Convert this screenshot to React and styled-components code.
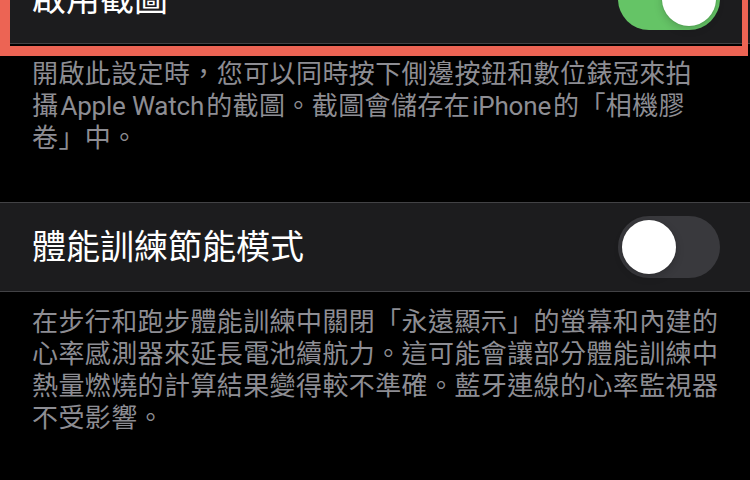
import React from "react";
import styled, { createGlobalStyle } from "styled-components";

const GlobalStyle = createGlobalStyle`
  html, body {
    margin: 0;
    padding: 0;
    background: #000;
    overflow: hidden;
  }
  body {
    font-family: Roboto, "Noto Sans CJK TC", sans-serif;
  }
`;

const Screen = styled.div`
  position: relative;
  display: flex;
  flex-direction: column;
  height: 480px;
  overflow: hidden;
  background: #000;
`;

const Group = styled.section`
  display: flex;
  flex-direction: column;
  margin-top: ${({ offset }) => offset || 0}px;
`;

const Cell = styled.div`
  display: flex;
  align-items: center;
  justify-content: space-between;
  box-sizing: border-box;
  height: 90px;
  padding: 0 30px 0 32px;
  background: #1c1c1e;
  border-bottom: 1px solid #424245;
  border-top: ${({ topLine }) => (topLine ? "1px solid #424245" : "none")};
`;

const Title = styled.span`
  font-size: 34px;
  color: #fff;
  line-height: 40px;
`;

const Track = styled.div`
  display: flex;
  align-items: center;
  justify-content: ${({ on }) => (on ? "flex-end" : "flex-start")};
  box-sizing: border-box;
  width: 102px;
  height: 62px;
  padding: 4px;
  border-radius: 31px;
  background: ${({ on }) => (on ? "#65c466" : "#39393d")};
`;

const Knob = styled.div`
  width: 54px;
  height: 54px;
  border-radius: 50%;
  background: #fff;
  box-shadow: 0 3px 8px rgba(0, 0, 0, 0.18), 0 0 0 1px rgba(0, 0, 0, 0.05);
`;

const Footer = styled.p`
  margin: 0;
  padding: 14px 28px 48px 32px;
  font-size: 26px;
  letter-spacing: 0.4px;
  line-height: 32px;
  color: #8d8d93;
`;

const Latin = styled.span`
  letter-spacing: -0.2px;
  margin: 0 2px;
`;

const Highlight = styled.div`
  position: absolute;
  top: -20px;
  left: 0;
  right: 2px;
  height: 76px;
  box-sizing: border-box;
  border-left: 10px solid #ec6454;
  border-right: 6px solid #ec6454;
  border-bottom: 10px solid #ec6454;
  pointer-events: none;
`;

function Toggle({ on }) {
  return (
    <Track on={on}>
      <Knob />
    </Track>
  );
}

export default function App() {
  return (
    <>
      <GlobalStyle />
      <Screen>
        <Group offset={-46}>
          <Cell>
            <Title>啟用截圖</Title>
            <Toggle on />
          </Cell>
          <Footer>
            開啟此設定時，您可以同時按下側邊按鈕和數位錶冠來拍
            <br />
            攝<Latin>Apple Watch</Latin>的截圖。截圖會儲存在<Latin>iPhone</Latin>的「相機膠
            <br />
            卷」中。
          </Footer>
        </Group>

        <Group>
          <Cell topLine>
            <Title>體能訓練節能模式</Title>
            <Toggle />
          </Cell>
          <Footer>
            在步行和跑步體能訓練中關閉「永遠顯示」的螢幕和內建的
            <br />
            心率感測器來延長電池續航力。這可能會讓部分體能訓練中
            <br />
            熱量燃燒的計算結果變得較不準確。藍牙連線的心率監視器
            <br />
            不受影響。
          </Footer>
        </Group>

        <Highlight />
      </Screen>
    </>
  );
}
